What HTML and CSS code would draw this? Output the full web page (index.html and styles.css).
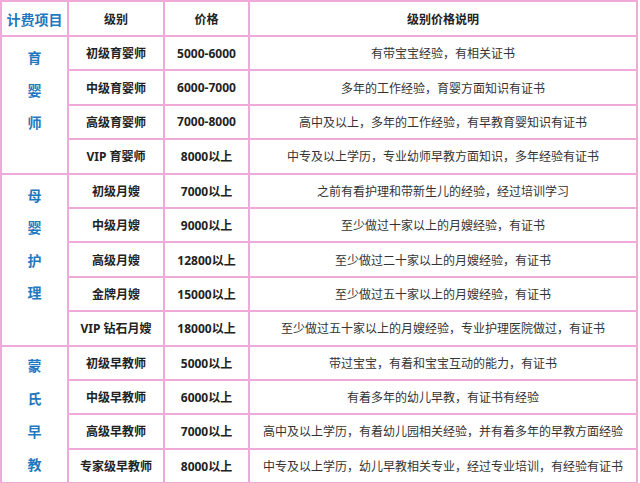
FILE: index.html
```html
<!DOCTYPE html>
<html lang="zh-CN">
<head>
<meta charset="utf-8">
<title>计费项目</title>
<link rel="stylesheet" href="styles.css">
</head>
<body>
<table class="price">
  <colgroup>
    <col class="c1"><col class="c2"><col class="c3"><col class="c4">
  </colgroup>
  <thead>
    <tr class="head">
      <th class="item">计费项目</th>
      <th>级别</th>
      <th>价格</th>
      <th>级别价格说明</th>
    </tr>
  </thead>
  <tbody>
    <tr>
      <td class="group" rowspan="4">育<br>婴<br>师</td>
      <td class="level">初级育婴师</td><td class="cost">5000-6000</td><td class="desc">有带宝宝经验，有相关证书</td>
    </tr>
    <tr><td class="level">中级育婴师</td><td class="cost">6000-7000</td><td class="desc">多年的工作经验，育婴方面知识有证书</td></tr>
    <tr><td class="level">高级育婴师</td><td class="cost">7000-8000</td><td class="desc">高中及以上，多年的工作经验，有早教育婴知识有证书</td></tr>
    <tr><td class="level">VIP 育婴师</td><td class="cost">8000以上</td><td class="desc">中专及以上学历，专业幼师早教方面知识，多年经验有证书</td></tr>
    <tr>
      <td class="group" rowspan="5">母<br>婴<br>护<br>理</td>
      <td class="level">初级月嫂</td><td class="cost">7000以上</td><td class="desc">之前有看护理和带新生儿的经验，经过培训学习</td>
    </tr>
    <tr><td class="level">中级月嫂</td><td class="cost">9000以上</td><td class="desc">至少做过十家以上的月嫂经验，有证书</td></tr>
    <tr><td class="level">高级月嫂</td><td class="cost">12800以上</td><td class="desc">至少做过二十家以上的月嫂经验，有证书</td></tr>
    <tr><td class="level">金牌月嫂</td><td class="cost">15000以上</td><td class="desc">至少做过五十家以上的月嫂经验，有证书</td></tr>
    <tr><td class="level">VIP 钻石月嫂</td><td class="cost">18000以上</td><td class="desc">至少做过五十家以上的月嫂经验，专业护理医院做过，有证书</td></tr>
    <tr>
      <td class="group last" rowspan="4">蒙<br>氏<br>早<br>教</td>
      <td class="level">初级早教师</td><td class="cost">5000以上</td><td class="desc">带过宝宝，有着和宝宝互动的能力，有证书</td>
    </tr>
    <tr><td class="level">中级早教师</td><td class="cost">6000以上</td><td class="desc">有着多年的幼儿早教，有证书有经验</td></tr>
    <tr><td class="level">高级早教师</td><td class="cost">7000以上</td><td class="desc">高中及以上学历，有着幼儿园相关经验，并有着多年的早教方面经验</td></tr>
    <tr><td class="level">专家级早教师</td><td class="cost">8000以上</td><td class="desc">中专及以上学历，幼儿早教相关专业，经过专业培训，有经验有证书</td></tr>
  </tbody>
</table>
</body>
</html>
```
FILE: styles.css
```css
html, body {
  margin: 0;
  padding: 0;
  background: #ffffff;
}

.price {
  border-collapse: collapse;
  table-layout: fixed;
  width: 638px;
  font-family: "Noto Sans", "Noto Sans CJK SC", sans-serif;
  font-size: 12px;
  color: #222;
}

.c1 { width: 67px; }
.c2 { width: 96px; }
.c3 { width: 85px; }
.c4 { width: 388px; }

.price th,
.price td {
  border: 2px solid #eeaad8;
  padding: 0;
  text-align: center;
  vertical-align: middle;
}

.price tr {
  height: 34.4px;
}

.price .head {
  height: 35px;
}

.price th {
  font-weight: 700;
  font-size: 12px;
  color: #222;
}

.price th.item {
  font-size: 14px;
  color: #1f78c0;
}

.level,
.cost {
  font-weight: 700;
  color: #222;
}

.desc {
  font-weight: 400;
  color: #333;
}

.group {
  vertical-align: top !important;
  padding-top: 5px !important;
  font-size: 14px;
  font-weight: 700;
  line-height: 32.5px;
  color: #1f78c0;
}

.group.last {
  padding-top: 2px !important;
  line-height: 33px;
}
```
